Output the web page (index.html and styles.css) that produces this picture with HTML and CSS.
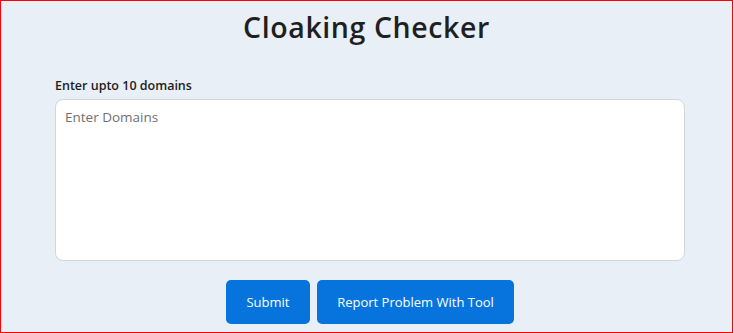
FILE: index.html
```html
<!DOCTYPE html>
<html lang="en">
<head>
<meta charset="utf-8">
<title>Cloaking Checker</title>
<link rel="stylesheet" href="styles.css">
</head>
<body>
<div class="frame">
  <h1 class="title">Cloaking Checker</h1>
  <div class="form">
    <label class="label" for="domains">Enter upto 10 domains</label>
    <textarea id="domains" class="domains" placeholder="Enter Domains"></textarea>
    <div class="actions">
      <button class="btn btn-submit" type="button">Submit</button>
      <button class="btn btn-report" type="button">Report Problem With Tool</button>
    </div>
  </div>
</div>
</body>
</html>
```

FILE: styles.css
```css
html, body {
  margin: 0;
  padding: 0;
  background: #ffffff;
}
body {
  font-family: "Open Sans", "Liberation Sans", sans-serif;
  color: #1d1d1f;
}
.frame {
  box-sizing: border-box;
  width: 733px;
  height: 333px;
  border: 1px solid #ff0000;
  background: #e9eff7;
  overflow: hidden;
}
.title {
  margin: 8px 0 0;
  text-align: center;
  font-size: 28.5px;
  font-weight: 600;
  line-height: 36px;
  color: #1f1f22;
  letter-spacing: 0.6px;
}
.form {
  padding: 32px 48px 0 54px;
  display: flex;
  flex-direction: column;
}
.label {
  font-size: 12.5px;
  font-weight: 600;
  line-height: 18px;
  color: #1d1d1f;
  margin-bottom: 4px;
}
.domains {
  box-sizing: border-box;
  width: 630px;
  height: 162px;
  border: 1px solid #d3d6db;
  border-radius: 8px;
  background: #ffffff;
  padding: 8px 9px;
  font-family: inherit;
  font-size: 13.5px;
  resize: none;
  outline: none;
}
.domains::placeholder {
  color: #6f6f72;
}
.actions {
  display: flex;
  justify-content: center;
  gap: 7px;
  margin-top: 19px;
  width: 630px;
}
.btn {
  height: 44px;
  border: none;
  border-radius: 5px;
  background: #0674dc;
  color: #ffffff;
  font-family: inherit;
  font-size: 13px;
  font-weight: 500;
  padding: 0;
}
.btn-submit {
  width: 84px;
}
.btn-report {
  width: 197px;
}
```
